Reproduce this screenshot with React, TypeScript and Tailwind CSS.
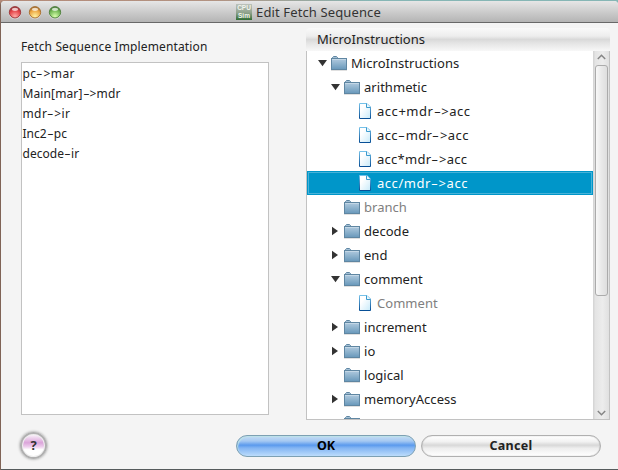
import React from 'react';

type Kind = 'folder' | 'file';
type Row = {
  label: string;
  level: 0 | 1 | 2;
  kind: Kind;
  open?: boolean;
  muted?: boolean;
  selected?: boolean;
  tracking?: string;
};

const rows: Row[] = [
  { label: 'MicroInstructions', level: 0, kind: 'folder', open: true },
  { label: 'arithmetic', level: 1, kind: 'folder', open: true },
  { label: 'acc+mdr->acc', level: 2, kind: 'file', tracking: 'tracking-[0.54px]' },
  { label: 'acc-mdr->acc', level: 2, kind: 'file', tracking: 'tracking-[0.4px]' },
  { label: 'acc*mdr->acc', level: 2, kind: 'file', tracking: 'tracking-[0.26px]' },
  { label: 'acc/mdr->acc', level: 2, kind: 'file', selected: true, tracking: 'tracking-[0.54px]' },
  { label: 'branch', level: 1, kind: 'folder', muted: true },
  { label: 'decode', level: 1, kind: 'folder', open: false },
  { label: 'end', level: 1, kind: 'folder', open: false },
  { label: 'comment', level: 1, kind: 'folder', open: true },
  { label: 'Comment', level: 2, kind: 'file', muted: true },
  { label: 'increment', level: 1, kind: 'folder', open: false },
  { label: 'io', level: 1, kind: 'folder', open: false },
  { label: 'logical', level: 1, kind: 'folder' },
  { label: 'memoryAccess', level: 1, kind: 'folder', open: false },
  { label: '', level: 1, kind: 'folder' },
];

const steps = [
  { text: 'pc->mar', tracking: 'tracking-[0.4px]' },
  { text: 'Main[mar]->mdr', tracking: 'tracking-[0.12px]' },
  { text: 'mdr->ir', tracking: 'tracking-[0.4px]' },
  { text: 'Inc2-pc', tracking: 'tracking-[0.02px]' },
  { text: 'decode-ir', tracking: 'tracking-[0.02px]' },
];

const indents = ['pl-[11px]', 'pl-[24px]', 'pl-[37px]'];

// Widens every hyphen, so that arrows such as "->" read clearly.
function Code({ text }: { text: string }) {
  return (
    <>
      {text.split(/(-)/).map((part, i) =>
        part === '-' ? (
          <span key={i} className="inline-block w-[0.59em] scale-x-[1.65] text-center">
            -
          </span>
        ) : (
          part
        ),
      )}
    </>
  );
}

function Folder() {
  return (
    <svg width="16" height="15" viewBox="0 0 16 15" className="block shrink-0">
      <defs>
        <linearGradient id="folder" x1="0" y1="0" x2="0" y2="1">
          <stop offset="0" stopColor="#b2cbdf" />
          <stop offset="1" stopColor="#6898ba" />
        </linearGradient>
      </defs>
      <path d="M1.5 3V1.5L2.5.5h3l1 1V3" fill="#a3c0d6" stroke="#5f86a2" />
      <rect x=".5" y="2.5" width="15" height="11" fill="url(#folder)" stroke="#5f86a2" />
      <path d="M1 3.5h14" stroke="#c3d7e6" />
      <path d="M0 14.5h16" stroke="#000" strokeOpacity=".12" />
    </svg>
  );
}

function FileIcon() {
  return (
    <svg width="12" height="16" viewBox="0 0 12 16" className="block shrink-0">
      <defs>
        <linearGradient id="fileEdge" x1="0" y1="0" x2="0" y2="1">
          <stop offset="0" stopColor="#75c1e9" />
          <stop offset="1" stopColor="#084f96" />
        </linearGradient>
        <linearGradient id="fileBody" x1="0" y1="0" x2="1" y2="1">
          <stop offset=".3" stopColor="#fff" />
          <stop offset="1" stopColor="#c8eaf9" />
        </linearGradient>
      </defs>
      <path d="M.5.5H8L11.5 4V15.5H.5Z" fill="url(#fileBody)" stroke="url(#fileEdge)" />
      <path d="M7.5.5V4.5H11.5" fill="#eaf7fd" stroke="#3c9bce" />
    </svg>
  );
}

function Arrow({ open }: { open?: boolean }) {
  return (
    <svg width="9" height="10" viewBox="0 0 9 10" className="block shrink-0">
      {open === true && <path d="M0 2H9L4.5 8.2Z" fill="#333" />}
      {open === false && <path d="M1 .7V9.3L7 5Z" fill="#333" />}
    </svg>
  );
}

function TreeRow({ row }: { row: Row }) {
  return (
    <div
      className={`flex h-6 shrink-0 items-center ${indents[row.level]} ${
        row.selected ? 'bg-[#0096c9] text-white outline outline-1 -outline-offset-2 outline-[#48b2d8]' : row.muted ? 'text-[#808080]' : 'text-[#222]'
      }`}
    >
      {row.kind === 'folder' ? <Arrow open={row.open} /> : <span className="w-[9px]" />}
      <span className={`flex w-4 shrink-0 ${row.kind === 'folder' ? 'ml-[4px]' : 'ml-[6px]'}`}>
        {row.kind === 'folder' ? <Folder /> : <FileIcon />}
      </span>
      <span className={`whitespace-nowrap text-[13px] leading-6 ${row.tracking ?? 'tracking-[0.04px]'} ${row.kind === 'folder' ? 'ml-[4px]' : 'ml-[2px]'}`}>
        <Code text={row.label} />
      </span>
    </div>
  );
}

function Light({ id, edge, dark, bright }: { id: string; edge: string; dark: string; bright: string }) {
  return (
    <svg width="14" height="15" viewBox="0 0 14 15" className="block">
      <defs>
        <radialGradient id={id} cx=".5" cy=".85" r=".8">
          <stop offset="0" stopColor={bright} />
          <stop offset=".65" stopColor={dark} />
          <stop offset="1" stopColor={edge} />
        </radialGradient>
      </defs>
      <circle cx="7" cy="8" r="6.2" fill="#fff" fillOpacity=".5" />
      <circle cx="7" cy="7.3" r="5.7" fill={`url(#${id})`} stroke={edge} strokeWidth=".9" />
      <ellipse cx="7" cy="4.3" rx="3" ry="1.6" fill="#fff" fillOpacity=".7" />
    </svg>
  );
}

function Emblem() {
  return (
    <svg width="16" height="16" viewBox="0 0 16 16" className="block">
      <defs>
        <linearGradient id="emblem" x1="0" y1="0" x2="0" y2="1">
          <stop offset="0" stopColor="#bcc2bb" />
          <stop offset=".55" stopColor="#8fa28c" />
          <stop offset="1" stopColor="#316c35" />
        </linearGradient>
      </defs>
      <rect width="16" height="16" fill="url(#emblem)" />
      <g fontFamily="Liberation Sans, sans-serif" fontWeight="700" fontSize="6.5" fill="#f2f6ef" textAnchor="middle">
        <text x="8" y="6.4">CPU</text>
        <text x="8" y="14.4">Sim</text>
      </g>
    </svg>
  );
}

function Chevron({ up }: { up?: boolean }) {
  return (
    <svg width="9" height="6" viewBox="0 0 9 6" className="block shrink-0">
      <path d={up ? 'M.8 5L4.5 1.3L8.2 5' : 'M.8 1L4.5 4.7L8.2 1'} fill="none" stroke="#858585" strokeWidth="1.5" />
    </svg>
  );
}

export default function App() {
  return (
    <div className="h-[470px] w-[618px] overflow-hidden bg-[linear-gradient(90deg,#b48a78,#b29382_35%,#86b6b5_60%,#86b6b5)] pt-px font-['Noto_Sans','Open_Sans',sans-serif] text-[#222]">
      <div className="flex h-[469px] flex-col rounded-t-[4px] border-l border-l-[#806457] bg-[#f4f4f4]">
        <header className="relative flex h-[22px] shrink-0 items-center justify-center rounded-t-[4px] border-b border-b-[#686868] bg-[linear-gradient(#e6e6e6,#b4b4b4)]">
          <div className="absolute left-[7px] top-[4px] flex gap-[6px]">
            <Light id="close" edge="#963336" dark="#e44448" bright="#ffaaa5" />
            <Light id="minimize" edge="#a36b2d" dark="#eda743" bright="#fff2a1" />
            <Light id="zoom" edge="#4c7c3a" dark="#75b957" bright="#d8ffac" />
          </div>
          <div className="flex items-center gap-1 pr-[2px]">
            <Emblem />
            <h1 className="whitespace-nowrap text-[13px] font-normal leading-5 tracking-[0.12px] text-[#333]">Edit Fetch Sequence</h1>
          </div>
        </header>

        <main className="flex h-[397px] shrink-0 pl-5">
          <section className="w-[248px] shrink-0 pt-[14px]">
            <h2 className="h-[25px] whitespace-nowrap text-[12px] leading-5 tracking-[0.13px]">Fetch Sequence Implementation</h2>
            <ul className="h-[353px] border border-[#c2c2c2] bg-white pt-px text-[12px]">
              {steps.map((s) => (
                <li key={s.text} className={`h-5 whitespace-nowrap pl-[0.5px] leading-[19px] ${s.tracking}`}>
                  <Code text={s.text} />
                </li>
              ))}
            </ul>
          </section>

          <section className="ml-[37px] w-[304px] shrink-0 pt-[5px]">
            <h2 className="h-[23px] rounded-t-[4px] bg-[linear-gradient(#f9f9f9,#ededed_35%,#d9d9d9_50%,#e4e4e4_65%,#f8f8f8)] pl-[11px] text-[13px] leading-[23px] tracking-[0.03px]">
              MicroInstructions
            </h2>
            <div className="flex h-[369px] overflow-hidden border border-t-0 border-[#c2c2c2] bg-white">
              <div className="flex flex-1 flex-col overflow-hidden">
                {rows.map((r, i) => (
                  <TreeRow key={i} row={r} />
                ))}
              </div>
              <div className="flex w-4 shrink-0 flex-col items-center bg-[linear-gradient(90deg,#d2d2d2,#e4e4e4_15%,#ececec_60%,#e0e0e0)] pb-[3px] pt-[3px]">
                <Chevron up />
                <div className="mt-[5px] h-[231px] w-[13px] rounded-[3px] border border-[#ababab] bg-[linear-gradient(90deg,#f8f8f8,#e9e9e9_50%,#dedede)]" />
                <div className="flex-1" />
                <Chevron />
              </div>
            </div>
          </section>
        </main>

        <footer className="flex flex-1 border-b border-b-[#555b5c] pl-[19px] pt-[10px]">
          <button className="mt-[2px] flex h-[27px] w-[27px] items-center justify-center rounded-full border-2 border-[#b0b0b0] bg-[linear-gradient(#fdfafd,#dba4da_38%,#edcdec_55%,#ffffff_68%)] text-[13px] font-bold leading-none text-[#333] shadow-[0_0_3px_#888,inset_0_0_0_1px_#eee]">
            ?
          </button>
          <button className="ml-[189px] mt-[5px] h-[22px] w-[180px] rounded-full border border-[#7da0b3] bg-[linear-gradient(#c4dcf3,#a6c9f2_25%,#5b9aed_46%,#83b5f3_60%,#bcdcfb)] text-[12.5px] font-bold leading-[20px] text-black shadow-[inset_1px_1px_1px_#bce1e8]">
            OK
          </button>
          <button className="ml-[5px] mt-[5px] h-[22px] w-[180px] rounded-full border border-[#b0b0b0] bg-[linear-gradient(#ffffff,#f2f2f2_28%,#d8d8d8_46%,#eeeeee_62%,#ffffff)] text-[12.5px] font-bold leading-[20px] tracking-[0.3px] text-[#222] shadow-[inset_0_0_1px_#999]">
            Cancel
          </button>
        </footer>
      </div>
    </div>
  );
}
